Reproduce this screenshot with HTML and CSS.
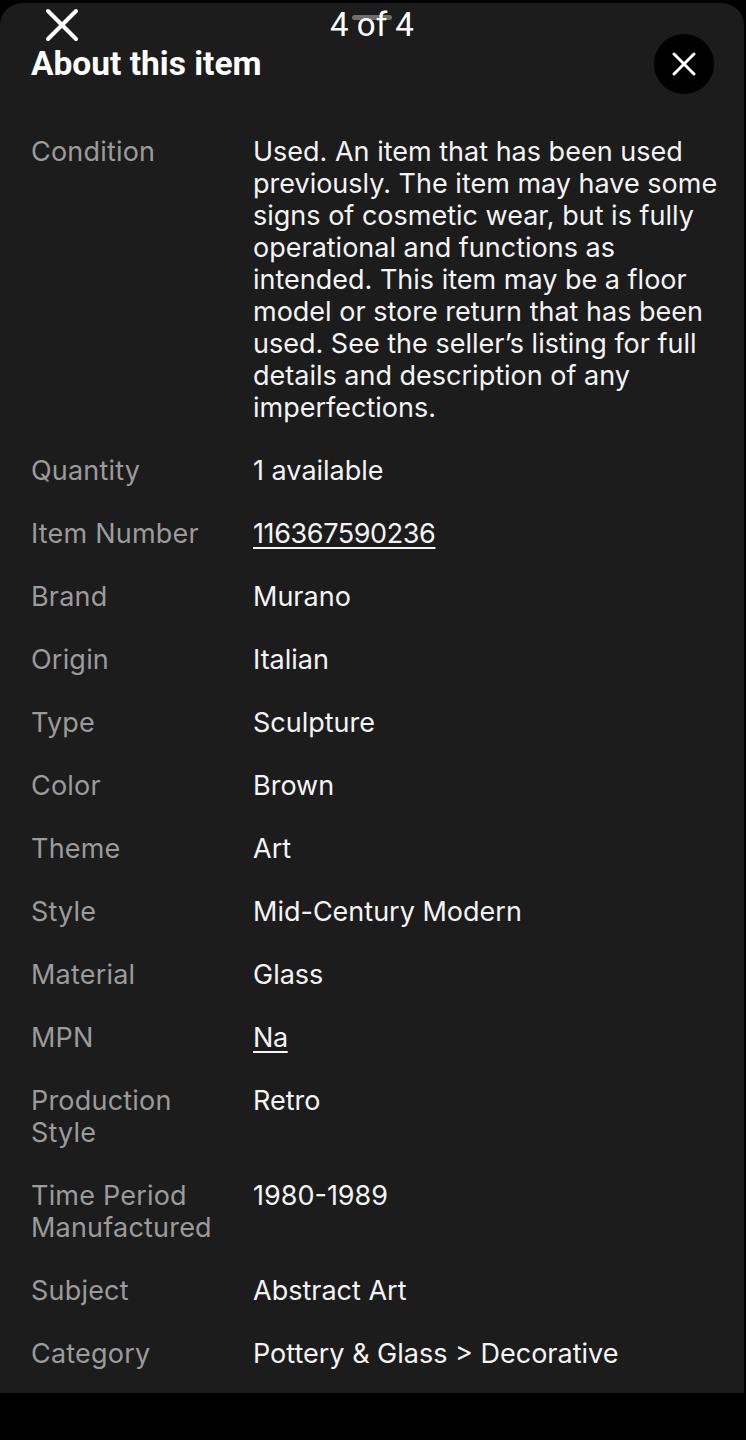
FILE: index.html
```html
<!DOCTYPE html>
<html lang="en">
<head>
<meta charset="utf-8">
<title>About this item</title>
<link rel="stylesheet" href="styles.css">
</head>
<body>
<div class="sheet">
  <div class="overlay">
    <span class="grabber"></span>
    <svg class="viewer-close" viewBox="0 0 34 34" width="34" height="34" aria-hidden="true">
      <path d="M3 3 L31 31 M31 3 L3 31" stroke="#fff" stroke-width="4" stroke-linecap="round" fill="none"/>
    </svg>
    <div class="counter">4 of 4</div>
  </div>

  <div class="title-row">
    <h1 class="title">About this item</h1>
    <button class="close" aria-label="Close">
      <svg viewBox="0 0 24 24" width="24" height="24" aria-hidden="true">
        <path d="M2 2 L22 22 M22 2 L2 22" stroke="#fff" stroke-width="3" stroke-linecap="round" fill="none"/>
      </svg>
    </button>
  </div>

  <dl class="specs">
    <div class="row"><dt>Condition</dt><dd>Used. An item that has been used previously. The item may have some signs of cosmetic wear, but is fully operational and functions as intended. This item may be a floor model or store return that has been used. See the seller’s listing for full details and description of any imperfections.</dd></div>
    <div class="row"><dt>Quantity</dt><dd>1 available</dd></div>
    <div class="row"><dt>Item Number</dt><dd><a class="link" href="#">116367590236</a></dd></div>
    <div class="row"><dt>Brand</dt><dd>Murano</dd></div>
    <div class="row"><dt>Origin</dt><dd>Italian</dd></div>
    <div class="row"><dt>Type</dt><dd>Sculpture</dd></div>
    <div class="row"><dt>Color</dt><dd>Brown</dd></div>
    <div class="row"><dt>Theme</dt><dd>Art</dd></div>
    <div class="row"><dt>Style</dt><dd>Mid-Century Modern</dd></div>
    <div class="row"><dt>Material</dt><dd>Glass</dd></div>
    <div class="row"><dt>MPN</dt><dd><a class="link" href="#">Na</a></dd></div>
    <div class="row"><dt>Production Style</dt><dd>Retro</dd></div>
    <div class="row"><dt>Time Period Manufactured</dt><dd>1980-1989</dd></div>
    <div class="row"><dt>Subject</dt><dd>Abstract Art</dd></div>
    <div class="row"><dt>Category</dt><dd>Pottery &amp; Glass &gt; Decorative</dd></div>
  </dl>
</div>
</body>
</html>
```

FILE: styles.css
```css
* { box-sizing: border-box; }

html, body {
  margin: 0;
  padding: 0;
  background: #000;
}

body {
  width: 746px;
  min-height: 1440px;
  padding-top: 3px;
  font-family: Inter, "Noto Sans", sans-serif;
  color: #f2f2f2;
}

.sheet {
  position: relative;
  width: 744px;
  background: #1c1c1c;
  border-radius: 22px 22px 0 0;
  padding: 31px 0 23px 0;
}

.overlay {
  position: absolute;
  top: 0;
  left: 0;
  right: 0;
  height: 40px;
}

.grabber {
  position: absolute;
  left: 352px;
  top: 12px;
  width: 40px;
  height: 5px;
  border-radius: 3px;
  background: #6e6e6e;
}

.viewer-close {
  position: absolute;
  left: 45px;
  top: 5px;
}

.counter {
  position: absolute;
  left: 0;
  right: 0;
  top: 2px;
  text-align: center;
  font-family: Roboto, "Liberation Sans", sans-serif;
  font-size: 33px;
  line-height: 40px;
  color: #fff;
}

.title-row {
  display: flex;
  align-items: center;
  justify-content: space-between;
  height: 60px;
  padding: 0 30px 0 31px;
}

.title {
  margin: 0;
  font-family: Roboto, "Liberation Sans", sans-serif;
  font-weight: 700;
  font-size: 33.5px;
  line-height: 40px;
  color: #fff;
}

.close {
  width: 60px;
  height: 60px;
  border: 0;
  border-radius: 50%;
  background: #000;
  padding: 0;
  display: flex;
  align-items: center;
  justify-content: center;
}

.specs {
  margin: 42px 0 0 0;
  padding: 0 16px 0 31px;
  display: flex;
  flex-direction: column;
  gap: 31px;
  font-size: 27px;
  line-height: 32px;
}

.row {
  display: grid;
  grid-template-columns: 222px 1fr;
}

.row dt {
  color: #9b9b9b;
  padding-right: 30px;
  letter-spacing: 0.2px;
}

.row dd {
  margin: 0;
  color: #f4f4f4;
}

.link {
  color: inherit;
  text-decoration: underline;
  text-decoration-thickness: 2px;
  text-underline-offset: 4px;
  letter-spacing: -0.4px;
}
```
